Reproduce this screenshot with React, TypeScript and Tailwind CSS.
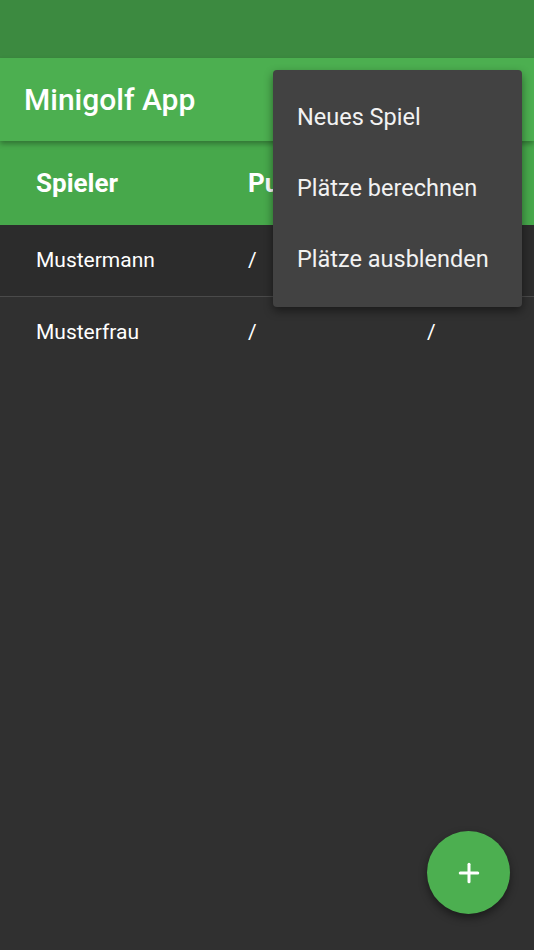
import { Plus } from "lucide-react"

type Player = {
  name: string
  points: string
  place: string
}

const players: Player[] = [
  { name: "Mustermann", points: "/", place: "/" },
  { name: "Musterfrau", points: "/", place: "/" },
]

const menuItems = [
  "Neues Spiel",
  "Plätze berechnen",
  "Plätze ausblenden",
]

export default function App() {
  return (
    <div
      className="relative h-[950px] w-[534px] overflow-hidden bg-[#303030] text-white"
      style={{ fontFamily: "Roboto, 'Noto Sans', sans-serif" }}
    >
      <div className="h-[58px] bg-[#3c8a40]" />

      <header className="relative z-10 flex h-[83px] items-center bg-[#4caf50] px-6 shadow-[0_3px_5px_rgba(0,0,0,0.3)]">
        <h1 className="text-[30px] font-medium leading-none">
          Minigolf App
        </h1>
      </header>

      <div className="flex h-[84px] items-center bg-[#47a84b] text-[26px] font-bold">
        <div className="w-[248px] pl-9">Spieler</div>
        <div className="w-[179px]">Punkte</div>
        <div>Platz</div>
      </div>

      {players.map((player, index) => (
        <div
          key={player.name}
          className={
            index === 0
              ? "flex h-[72px] items-center border-b border-[#4a4a4a] bg-[#2c2c2c] text-[21px]"
              : "flex h-[71px] items-center text-[21px]"
          }
        >
          <div className="w-[248px] pl-9">{player.name}</div>
          <div className="w-[179px]">{player.points}</div>
          <div>{player.place}</div>
        </div>
      ))}

      <div className="absolute left-[273px] top-[70px] z-20 w-[249px] rounded bg-[#424242] py-[12px] shadow-[0_4px_10px_rgba(0,0,0,0.45)]">
        {menuItems.map((item) => (
          <div
            key={item}
            className="flex h-[71px] items-center px-6 text-[23.5px] text-[#f2f2f2]"
          >
            {item}
          </div>
        ))}
      </div>

      <button className="absolute left-[427px] top-[831px] flex h-[83px] w-[83px] items-center justify-center rounded-full bg-[#4caf50] shadow-[0_4px_8px_rgba(0,0,0,0.45)]">
        <Plus size={30} strokeWidth={2.4} color="#ffffff" />
      </button>
    </div>
  )
}
